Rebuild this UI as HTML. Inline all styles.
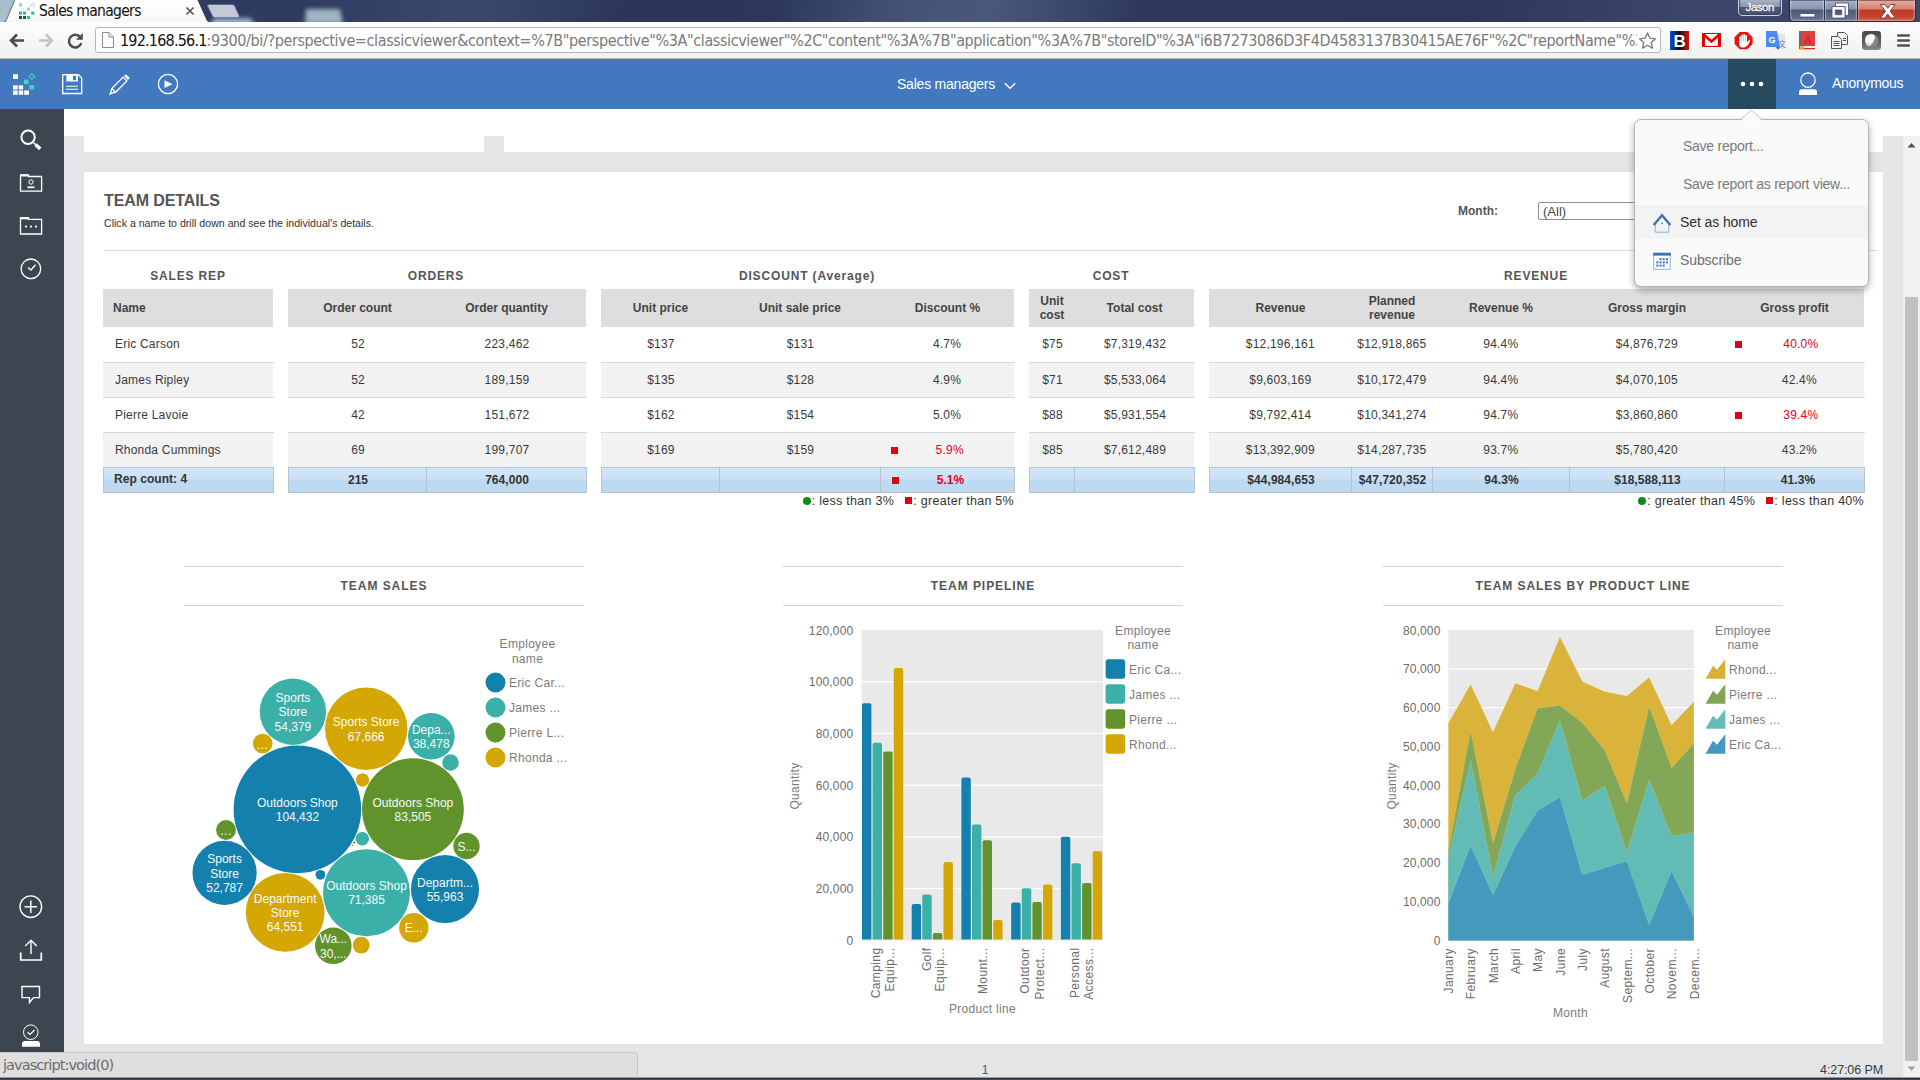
<!DOCTYPE html>
<html>
<head>
<meta charset="utf-8">
<title>Sales managers</title>
<style>
*{box-sizing:border-box;margin:0;padding:0}
html,body{width:1920px;height:1080px;overflow:hidden;background:#fff;font-family:"Liberation Sans",Arial,sans-serif;color:#333}
.abs{position:absolute}
#root{position:absolute;left:0;top:0;width:1920px;height:1080px;overflow:hidden;background:#fff}
/* browser chrome */
#titlebar{position:absolute;left:0;top:0;width:1920px;height:23px;background:linear-gradient(100deg,#2f3b61 0,#2f3b61 300px,#3c486b 470px,#2b365a 620px,#2c375b 760px,#47547a 900px,#4a577b 980px,#2e395d 1120px,#2c375b 1450px,#3a4568 1650px,#3c476a 1920px)}
#toolbar{position:absolute;left:0;top:22px;width:1920px;height:37px;background:linear-gradient(#fdfdfd,#f1f1f1);border-bottom:1px solid #b9b9b9}
#tab{position:absolute;left:0;top:0;width:215px;height:23px}
#tabtitle{position:absolute;left:39px;top:1px;font-size:15.5px;line-height:20px;color:#111;font-family:"DejaVu Sans Condensed","DejaVu Sans","Liberation Sans",sans-serif;letter-spacing:-0.7px;white-space:nowrap}
#addr{position:absolute;left:95px;top:27px;width:1566px;height:26px;background:#fff;border:1px solid #b5b5b5;border-radius:3px}
#url{position:absolute;left:120px;top:30px;font-size:16px;line-height:22px;color:#7a7a7a;white-space:nowrap;font-family:"DejaVu Sans Condensed","DejaVu Sans","Liberation Sans",sans-serif;letter-spacing:-0.38px;width:1517px;overflow:hidden}
#url b{font-weight:normal;color:#111;letter-spacing:-0.8px}
/* app header */
#apphdr{position:absolute;left:0;top:59px;width:1920px;height:50px;background:#4178be}
#morebtn{position:absolute;left:1728px;top:59px;width:48px;height:50px;background:#264a60}
.hdrtxt{position:absolute;color:#fff;font-size:14px;line-height:20px;white-space:nowrap}
/* sidebar */
#sidebar{position:absolute;left:0;top:109px;width:64px;height:944px;background:#3c4651}
/* content */
#content{position:absolute;left:64px;top:109px;width:1856px;height:944px;background:#fff}
.gray{position:absolute;background:#e4e5e7}
.white{position:absolute;background:#fff}

.sect{position:absolute;text-align:center;font-size:12px;font-weight:bold;letter-spacing:0.85px;color:#555;line-height:14px;white-space:nowrap}
.th{position:absolute;text-align:center;font-size:12px;font-weight:bold;color:#444;line-height:14px;white-space:nowrap}
.td{position:absolute;text-align:center;font-size:12px;color:#3a3a3a;line-height:14px;white-space:nowrap;letter-spacing:0.2px}
.tf{position:absolute;text-align:center;font-size:12px;font-weight:bold;color:#333;line-height:14px;white-space:nowrap;letter-spacing:0.05px}
.lg{position:absolute;text-align:right;font-size:12.5px;color:#333;line-height:16px;white-space:nowrap;letter-spacing:0.28px}
.gdot{display:inline-block;width:8px;height:8px;border-radius:50%;background:#0a8a1f;vertical-align:0px;margin-right:1px}
.rsq{display:inline-block;width:7px;height:7px;background:#e1000f;vertical-align:1px;margin-right:1px}
.ctitle{position:absolute;text-align:center;font-size:12px;font-weight:bold;letter-spacing:0.95px;color:#555;line-height:14px;white-space:nowrap}
.pi{position:absolute;font-size:14px;line-height:20px;white-space:nowrap;letter-spacing:-0.25px}
/* status */
#status{position:absolute;left:0;top:1052px;width:638px;height:26px;background:#dfdfdf;border-top:1px solid #c8c8c8;border-right:1px solid #c8c8c8;border-top-right-radius:4px;font-family:"DejaVu Sans","Liberation Sans",sans-serif;font-size:14.5px;letter-spacing:-0.93px;color:#6b6b6b;line-height:24px;padding-left:3px}
#bottomline{position:absolute;left:0;top:1077px;width:1920px;height:3px;background:linear-gradient(#9a9a9a 0,#9a9a9a 25%,#2b3040 34%,#2b3040 70%,#5d6478 100%)}
</style>
</head>
<body>
<div id="root">
<!--CHROME-->
<div id="titlebar"></div>
<svg class="abs" style="left:0;top:0" width="1920" height="23" viewBox="0 0 1920 23">
  <defs>
    <linearGradient id="tbg" x1="0" y1="0" x2="0" y2="1"><stop offset="0" stop-color="#fff"/><stop offset="1" stop-color="#f6f6f6"/></linearGradient>
    <linearGradient id="clsg" x1="0" y1="0" x2="0" y2="1"><stop offset="0" stop-color="#e6ada2"/><stop offset="0.42" stop-color="#d57f6e"/><stop offset="0.47" stop-color="#c23a23"/><stop offset="0.8" stop-color="#c8452e"/><stop offset="1" stop-color="#cf6450"/></linearGradient>
    <linearGradient id="wbg" x1="0" y1="0" x2="0" y2="1"><stop offset="0" stop-color="#a9b1c5"/><stop offset="0.42" stop-color="#8892ab"/><stop offset="0.47" stop-color="#4e597a"/><stop offset="1" stop-color="#6b7695"/></linearGradient>
  </defs>
  <!-- blurred aero highlights -->
  <defs><filter id="bl" x="-30%" y="-60%" width="160%" height="220%"><feGaussianBlur stdDeviation="2.2"/></filter>
  <filter id="bl2" x="-30%" y="-60%" width="160%" height="220%"><feGaussianBlur stdDeviation="14"/></filter></defs>
  <path d="M306 9 L340 9 L343 24 L305 24Z" fill="#b9d2d6" opacity="0.8" filter="url(#bl)"/>
  <path d="M214 18 L250 18 L256 25 L210 25Z" fill="#a5c3e0" opacity="0.9" filter="url(#bl)"/>
  <!-- new-tab button -->
  <path d="M207.500 4.500 h24.500 q2 0 2.800 1.800 l4.300 9.400 q0.800 2 -1.400 2 h-22.500 q-2 0 -2.900 -1.900 l-4.600 -9.500 q-0.700 -1.800 1.300 -1.800z" fill="#c3c9d6" stroke="#5d6784" stroke-width="0.8"/>
  <!-- left sliver -->
  <path d="M0 0 H14.500 L6 20 Q4.500 23.500 0 23.500Z" fill="#a9bfcb"/>
  <path d="M14.500 0 L6 20 Q4.500 23.500 0 23.500" fill="none" stroke="#8097a6" stroke-width="1"/>
  <!-- active tab -->
  <path d="M0 24 Q5 24 6.800 20 L15.300 0 L197.500 0 L206.500 20 Q208 23 212 23 L212 24 Z" fill="url(#tbg)"/>
  <!-- favicon -->
  <g>
    <rect x="19" y="3.200" width="3" height="3.300" fill="#8fd9cb"/>
    <rect x="27" y="7.500" width="3" height="3.200" fill="#8fd9cb"/>
    <rect x="19" y="11.600" width="3" height="3" fill="#1fbfa5"/><rect x="23" y="11.600" width="3" height="3" fill="#1fbfa5"/><rect x="31.200" y="11.600" width="3.200" height="3" fill="#1fbfa5"/>
    <rect x="19" y="16" width="3" height="3" fill="#0a5a4c"/><rect x="23" y="16" width="3" height="3" fill="#0c6354"/><rect x="27" y="16" width="3" height="3" fill="#1fbfa5"/>
    <rect x="31.400" y="3.600" width="2.800" height="2.800" fill="none" stroke="#a9e2d7" stroke-width="0.9" transform="rotate(45 32.800 5)"/>
  </g>
  <!-- tab close -->
  <path d="M186.5 7.5 l7 7 M193.5 7.5 l-7 7" stroke="#555" stroke-width="1.7"/>
  <!-- Jason button -->
  <defs><linearGradient id="jsg" x1="0" y1="0" x2="0" y2="1"><stop offset="0" stop-color="#a9b0c5"/><stop offset="0.42" stop-color="#8e97b0"/><stop offset="0.46" stop-color="#4d5979"/><stop offset="1" stop-color="#56628280"/></linearGradient></defs>
  <path d="M1738.500 0 V11 Q1738.500 15.500 1743 15.500 H1777 Q1781.500 15.500 1781.500 11 V0" fill="url(#jsg)" stroke="#cdd2df" stroke-width="1"/>
  <path d="M1739.700 0 V10.800 Q1739.700 14.300 1743.200 14.300 H1776.800 Q1780.300 14.300 1780.300 10.800 V0" fill="none" stroke="#2f3855" stroke-width="0.8"/>
  <text x="1746.300" y="11.300" font-family="Liberation Sans, sans-serif" font-size="11.500" fill="#1e2640" letter-spacing="-0.55" opacity="0.6" stroke="#1e2640" stroke-width="0.3">Jason</text>
  <text x="1745.800" y="10.800" font-family="Liberation Sans, sans-serif" font-size="11.500" fill="#fff" letter-spacing="-0.55" stroke="#fff" stroke-width="0.3">Jason</text>
  <!-- window buttons -->
  <path d="M1789.500 0 V17 Q1789.500 21.500 1794 21.500 H1911 Q1915.500 21.500 1915.500 17 V0Z" fill="url(#wbg)" stroke="#1c233b" stroke-width="1"/>
  <path d="M1857.500 0 V21.500 H1911 Q1915.500 21.500 1915.500 17 V0Z" fill="url(#clsg)" stroke="#43201c" stroke-width="1"/>
  <path d="M1824.500 0 V21" stroke="#2a3350" stroke-width="1"/>
  <path d="M1790.700 0 V17 Q1790.700 20.300 1794 20.300 H1911 Q1914.300 20.300 1914.300 17 V0 M1825.600 0 V20 M1823.400 0 V20 M1858.700 0 V20 M1856.300 0 V20" fill="none" stroke="#e3e6ee" stroke-width="0.9" opacity="0.55"/>
  <rect x="1800" y="13.600" width="15" height="3.400" fill="#fff" stroke="#434d68" stroke-width="0.8"/>
  <path d="M1835.500 3 h13 v12.500 h-3.500 v-9 h-9.500z" fill="#fff" stroke="#434d68" stroke-width="0.8"/>
  <path d="M1832 6.500 h13 v11.500 h-13z M1835.300 10 v4.700 h6.400 v-4.700z" fill="#fff" fill-rule="evenodd" stroke="#434d68" stroke-width="0.8"/>
  <path d="M1880.500 4.500 h4.500 l2.800 3.800 l2.800 -3.800 h4.500 l-5 6.700 l5.200 6.800 h-4.600 l-2.900 -4 l-2.900 4 h-4.600 l5.200 -6.800z" fill="#fff" stroke="#5b2a22" stroke-width="0.8"/>
</svg>
<div id="tabtitle">Sales managers</div>
<div id="toolbar"></div>
<svg class="abs" style="left:0;top:22px" width="1920" height="37" viewBox="0 22 1920 37">
  <!-- back -->
  <path d="M24 40.500 H11.500 M17 34.500 L11 40.500 L17 46.500" fill="none" stroke="#4d4d4d" stroke-width="2.600"/>
  <!-- forward -->
  <path d="M39 40.500 H51.500 M46 34.500 L52 40.500 L46 46.500" fill="none" stroke="#c4c4c4" stroke-width="2.600"/>
  <!-- reload -->
  <path d="M80.300 37.300 A6.300 6.300 0 1 0 81.300 43" fill="none" stroke="#4d4d4d" stroke-width="2.500"/>
  <path d="M82.800 33 V39.800 H76z" fill="#4d4d4d"/>
</svg>
<div id="addr"></div>
<svg class="abs" style="left:100px;top:31px" width="16" height="18" viewBox="0 0 16 18">
  <path d="M2.500 1.500 H9 L13.500 6 V16.500 H2.500Z" fill="#fdfdfd" stroke="#8c8c8c" stroke-width="1"/>
  <path d="M9 1.500 V6 H13.500" fill="#e8e8e8" stroke="#8c8c8c" stroke-width="1"/>
</svg>
<div id="url"><b>192.168.56.1</b>:9300/bi/?perspective=classicviewer&amp;context=%7B"perspective"%3A"classicviewer"%2C"content"%3A%7B"application"%3A%7B"storeID"%3A"i6B7273086D3F4D4583137B30415AE76F"%2C"reportName"%3A"Sales</div>
<svg class="abs" style="left:1636px;top:28px" width="284" height="26" viewBox="1636 28 284 26">
  <!-- star -->
  <path d="M1647.500 33 l2.400 5.200 5.600 0.600 -4.200 3.800 1.200 5.600 -5 -2.900 -5 2.900 1.200 -5.600 -4.200 -3.800 5.600 -0.600z" fill="#fff" stroke="#777" stroke-width="1.300" stroke-linejoin="round"/>
  <!-- B -->
  <defs><linearGradient id="bg1" x1="0" x2="1"><stop offset="0" stop-color="#0a4bd6"/><stop offset="0.5" stop-color="#111"/><stop offset="1" stop-color="#e01010"/></linearGradient></defs>
  <rect x="1670" y="31" width="19" height="19" fill="url(#bg1)"/>
  <text x="1673.500" y="47" font-family="Liberation Sans, sans-serif" font-weight="bold" font-size="17" fill="#fff">B</text>
  <!-- gmail -->
  <rect x="1702.500" y="33.500" width="18" height="13" fill="#fff" stroke="#d00" stroke-width="1"/>
  <path d="M1703.500 46 V34 M1719.500 46 V34" stroke="#e00000" stroke-width="3"/>
  <path d="M1703 34 L1711.500 41.500 L1720 34" fill="none" stroke="#e00000" stroke-width="2.600"/>
  <path d="M1705 46 L1709.500 41 M1718 46 L1713.500 41" stroke="#f0b0b0" stroke-width="0.700"/>
  <!-- stop hand -->
  <path d="M1739.800 32 h7.600 l5.200 5.200 v6.800 l-5.200 5.200 h-7.600 l-5.200 -5.200 v-6.800z" fill="#e41414"/>
  <g fill="#fff">
    <rect x="1739.300" y="36.300" width="1.700" height="7" rx="0.850"/>
    <rect x="1741.300" y="34.600" width="1.700" height="8" rx="0.850"/>
    <rect x="1743.300" y="34" width="1.700" height="8" rx="0.850"/>
    <rect x="1745.300" y="35" width="1.700" height="8" rx="0.850"/>
    <path d="M1739.300 41 h7.700 v3.500 q0 3 -3.500 3 h-1.200 q-3 0 -3 -3z"/>
    <path d="M1746.500 43.500 l2.200 -3.300 q0.900 -0.800 1.500 0.200 l-2.600 5.600z"/>
  </g>
  <!-- translate -->
  <rect x="1773" y="34" width="12" height="15" fill="#e3e3e3"/>
  <path d="M1766 31 h11 l3 16 h-14z" fill="#4a8af4"/>
  <path d="M1776 47 l2 3 2 -3z" fill="#2d5fc4"/>
  <text x="1768.500" y="43" font-family="Liberation Sans, sans-serif" font-weight="bold" font-size="9" fill="#fff">G</text>
  <text x="1778" y="46.500" font-family="Liberation Sans, Noto Sans CJK SC, sans-serif" font-size="8" fill="#5a8bd0">文</text>
  <!-- book -->
  <rect x="1799" y="31" width="16" height="15" fill="#e04040"/>
  <rect x="1799" y="31" width="2.500" height="18" fill="#6a6a6a"/>
  <rect x="1801" y="46" width="14" height="2.500" fill="#f1f1f1"/>
  <rect x="1801" y="48" width="14" height="1.300" fill="#d03030"/>
  <text x="1803.500" y="43.500" font-family="Liberation Sans, sans-serif" font-weight="bold" font-size="11.500" fill="#c42e2e">A</text>
  <path d="M1800 46 h4 v4 l-2 -1.500 -2 1.500z" fill="#f0b400"/>
  <!-- copy -->
  <path d="M1837.500 32.500 h7 l3 3 v9 h-10z" fill="#f4f4f4" stroke="#555" stroke-width="1"/>
  <path d="M1831.500 36.500 h7 l3 3 v9 h-10z" fill="#f4f4f4" stroke="#555" stroke-width="1"/>
  <path d="M1833.500 41.500 h6 M1833.500 43.500 h6 M1833.500 45.500 h6 M1843 38.500 h3 M1843 40.500 h3" stroke="#555" stroke-width="1"/>
  <!-- shield -->
  <defs><linearGradient id="shg" x1="0" y1="0" x2="0" y2="1"><stop offset="0" stop-color="#474747"/><stop offset="0.6" stop-color="#5e5e5e"/><stop offset="1" stop-color="#8c8c8c"/></linearGradient></defs>
  <rect x="1862" y="31" width="19" height="19" rx="3.200" fill="url(#shg)"/>
  <path d="M1871 33.800 Q1878.500 35 1878.600 41 Q1878 47.500 1869.500 47 Z" fill="#858585"/>
  <path d="M1865 40 Q1865 34.200 1871.500 34 Q1876 34.500 1874.800 38.500 Q1873 44 1869 46.300 Q1865.200 45 1865 40Z" fill="#fafafa"/>
  <path d="M1866.500 42 L1872 43.500 L1869 46.300 Q1866.800 45 1866.500 42Z" fill="#dcdcdc"/>
  <!-- hamburger -->
  <path d="M1898.300 35.500 h10.400 M1898.300 40.500 h10.400 M1898.300 45.500 h10.400" stroke="#505050" stroke-width="2.700" stroke-linecap="round"/>
</svg>
<!--APPHDR-->
<div id="apphdr"></div>
<div id="morebtn"></div>
<svg class="abs" style="left:0;top:59px" width="1920" height="50" viewBox="0 59 1920 50">
  <!-- logo -->
  <rect x="13" y="74.200" width="5" height="4.800" fill="#fff"/>
  <rect x="13" y="85.300" width="4.700" height="4.200" fill="#fff"/><rect x="18.700" y="85.300" width="4.500" height="4.200" fill="#fff"/>
  <rect x="13" y="90.500" width="4.700" height="4.300" fill="#fff"/><rect x="18.700" y="90.500" width="4.500" height="4.300" fill="#fff"/><rect x="24.200" y="90.500" width="4.800" height="4.300" fill="#fff"/>
  <rect x="24" y="79.600" width="4.700" height="4.500" fill="#41d6c3"/>
  <rect x="29.400" y="85" width="4.700" height="4.600" fill="#41d6c3"/>
  <rect x="29.800" y="74.500" width="4" height="4" fill="none" stroke="#41d6c3" stroke-width="1" transform="rotate(45 31.800 76.500)"/>
  <!-- save -->
  <path d="M62.700 74.700 H78.500 L81.700 78 V93.500 H62.700Z" fill="none" stroke="#fff" stroke-width="1.300"/>
  <path d="M66.400 74.700 H78 V81.400 H66.400Z M73 75.800 V80.300 H76 V75.800Z" fill="#fff" fill-rule="evenodd"/>
  <path d="M66 86.300 H78 M66 89.300 H78" stroke="#fff" stroke-width="1.100"/>
  <!-- pencil -->
  <g transform="rotate(45 119 85)">
    <rect x="116.300" y="72.500" width="5.400" height="2.600" fill="#fff"/>
    <rect x="116.300" y="76.500" width="5.400" height="16" fill="none" stroke="#fff" stroke-width="1.300"/>
    <path d="M116.300 92.500 L119 97 L121.700 92.500" fill="none" stroke="#fff" stroke-width="1.300"/>
    <path d="M117.800 96 L119 99.500 L120.200 96Z" fill="#fff"/>
  </g>
  <!-- play -->
  <circle cx="168" cy="84" r="9.600" fill="none" stroke="#fff" stroke-width="1.300"/>
  <path d="M164.500 80.200 L172.500 84.200 L164.500 88Z" fill="#fff"/>
  <!-- chevron -->
  <path d="M1004.800 83.300 L1010 88.300 L1015.200 83.300" fill="none" stroke="#fff" stroke-width="1.500"/>
  <!-- dots -->
  <circle cx="1743" cy="84" r="2.300" fill="#fff"/><circle cx="1752" cy="84" r="2.300" fill="#fff"/><circle cx="1761" cy="84" r="2.300" fill="#fff"/>
  <!-- user -->
  <circle cx="1808" cy="80.200" r="7.200" fill="none" stroke="#fff" stroke-width="1.300"/>
  <path d="M1799 95 V92 Q1799 89.300 1802 89.300 H1814 Q1817 89.300 1817 92 V95Z" fill="#fff"/>
</svg>
<div class="hdrtxt" style="left:897px;top:74px;letter-spacing:-0.22px">Sales managers</div>
<div class="hdrtxt" style="left:1832px;top:73px;letter-spacing:-0.3px">Anonymous</div>
<!--SIDEBAR-->
<div id="sidebar"></div>
<svg class="abs" style="left:0;top:109px" width="64" height="944" viewBox="0 109 64 944">
  <g fill="none" stroke="#fff">
  <!-- search -->
  <circle cx="28.100" cy="137.300" r="6.700" stroke-width="2"/>
  <path d="M33.600 142.800 L35.500 144.500" stroke-width="1.600"/>
  <path d="M35.500 144.500 L40.200 148.800" stroke-width="3.600"/>
  <!-- folder user -->
  <path d="M20.500 174.800 H28.500 V176.500 H41.600 V191.200 H20.500Z" stroke-width="1.300"/>
  <path d="M20.500 175.500 H28.500" stroke-width="2"/>
  <circle cx="31" cy="182" r="2.200" stroke-width="1"/>
  <path d="M27.500 187.300 H34.500" stroke-width="1.800"/>
  <!-- folder dots -->
  <path d="M20.500 217.600 H28.500 V219.300 H41.600 V234 H20.500Z" stroke-width="1.300"/>
  <path d="M20.500 218.300 H28.500" stroke-width="2"/>
  <!-- clock -->
  <circle cx="30.900" cy="268.800" r="9.800" stroke-width="1.300"/>
  <path d="M28 267.500 L31 270 L35.500 264.800" stroke-width="1.300"/>
  <!-- plus -->
  <circle cx="30.800" cy="906.700" r="10.800" stroke-width="1.400"/>
  <path d="M30.800 900.500 V913 M24.600 906.700 H37" stroke-width="1.500"/>
  <!-- upload -->
  <path d="M20.700 952.500 V960 H41.300 V952.500" stroke-width="1.700"/>
  <path d="M31 954 V940.500 M25.300 946 L31 940.300 L36.700 946" stroke-width="1.400"/>
  <!-- comment -->
  <path d="M22 986.500 H39.500 V997.600 H33.500 L29.500 1002.500 V997.600 H22Z" stroke-width="1.400"/>
  <!-- person check -->
  <circle cx="30.800" cy="1032.200" r="7.300" stroke-width="1"/>
  <path d="M27.600 1032.300 L30 1034.500 L34.500 1030" stroke-width="1.200"/>
  </g>
  <circle cx="26" cy="226.600" r="1.100" fill="#fff"/><circle cx="31" cy="226.600" r="1.100" fill="#fff"/><circle cx="36" cy="226.600" r="1.100" fill="#fff"/>
  <path d="M22 1046.800 V1044 Q22 1041 25 1041 H37 Q40 1041 40 1044 V1046.800Z" fill="#fff"/>
</svg>
<!--CONTENT-->
<div id="content"></div>
<div class="gray" style="left:64px;top:136px;width:20px;height:942px;background:#e4e5e7"></div>
<div class="gray" style="left:484px;top:136px;width:20px;height:16px;background:#e4e5e7"></div>
<div class="gray" style="left:64px;top:152px;width:1839px;height:20px;background:#e4e5e7"></div>
<div class="gray" style="left:1883px;top:136px;width:20px;height:942px;background:#e4e5e7"></div>
<div class="gray" style="left:64px;top:1044px;width:1839px;height:34px;background:#e4e5e7"></div>
<div class="gray" style="left:1903px;top:136px;width:17px;height:942px;background:#f1f1f1"></div>
<div class="gray" style="left:1905px;top:297px;width:13px;height:764px;background:#c1c1c1"></div>
<svg class="abs" style="left:1903px;top:136px" width="17" height="942" viewBox="1903 136 17 942"><path d="M1907.500 147.500 L1911.500 143 L1915.500 147.500Z" fill="#505050"/><path d="M1907.500 1066.500 L1911.500 1071 L1915.500 1066.500Z" fill="#a3a3a3"/></svg>
<div class="abs" style="left:979px;top:1063px;width:12px;text-align:center;font-size:12px;line-height:14px;color:#555">1</div>
<div class="abs" style="left:1783px;top:1062px;width:100px;text-align:right;font-size:12.5px;line-height:16px;color:#3a3a3a;letter-spacing:-0.1px">4:27:06 PM</div>
<div class="abs" style="left:104px;top:191px;font-size:16px;font-weight:bold;line-height:20px;color:#555;letter-spacing:-0.1px;white-space:nowrap">TEAM DETAILS</div>
<div class="abs" style="left:104px;top:216px;font-size:10.6px;line-height:14px;color:#333;white-space:nowrap">Click a name to drill down and see the individual's details.</div>
<div class="abs" style="left:104px;top:250px;width:1774px;height:1px;background:#dcdcdc"></div>
<div class="abs" style="left:1458px;top:203px;font-size:12px;font-weight:bold;line-height:16px;color:#555;white-space:nowrap">Month:</div>
<div class="abs" style="left:1538px;top:202px;width:160px;height:18px;background:#fff;border:1px solid #8f8f8f;border-radius:2px"></div>
<div class="abs" style="left:1543px;top:204px;font-size:13px;line-height:16px;color:#444;white-space:nowrap">(All)</div>
<div class="sect" style="left:88px;top:269px;width:200px">SALES REP</div>
<div class="abs" style="left:103px;top:289px;width:170px;height:38px;background:#dedede"></div>
<div class="th" style="left:113px;top:301px;text-align:left">Name</div>
<div class="td" style="left:115px;top:337px;text-align:left">Eric Carson</div>
<div class="abs" style="left:103px;top:363px;width:170px;height:34px;background:#f2f2f2"></div>
<div class="abs" style="left:103px;top:362px;width:171px;height:1px;background:#d9d9d9"></div>
<div class="td" style="left:115px;top:373px;text-align:left">James Ripley</div>
<div class="abs" style="left:103px;top:397px;width:171px;height:1px;background:#d9d9d9"></div>
<div class="td" style="left:115px;top:408px;text-align:left">Pierre Lavoie</div>
<div class="abs" style="left:103px;top:433px;width:170px;height:34px;background:#f2f2f2"></div>
<div class="abs" style="left:103px;top:432px;width:171px;height:1px;background:#d9d9d9"></div>
<div class="td" style="left:115px;top:443px;text-align:left">Rhonda Cummings</div>
<div class="abs" style="left:103px;top:467px;width:171px;height:26px;background:linear-gradient(#cfe4f7 0,#cde2f6 44%,#bedaf2 50%,#bcd9f1 100%);border:1px solid #b7c3cf"></div>
<div class="tf" style="left:114px;top:472px;text-align:left">Rep count: 4</div>
<div class="sect" style="left:336px;top:269px;width:200px">ORDERS</div>
<div class="abs" style="left:288px;top:289px;width:298px;height:38px;background:#dedede"></div>
<div class="th" style="left:288.5px;top:301px;width:138px">Order count</div>
<div class="th" style="left:426.5px;top:301px;width:160px">Order quantity</div>
<div class="td" style="left:289px;top:337px;width:138px;">52</div>
<div class="td" style="left:427px;top:337px;width:160px;">223,462</div>
<div class="abs" style="left:288px;top:363px;width:298px;height:34px;background:#f2f2f2"></div>
<div class="abs" style="left:288px;top:362px;width:299px;height:1px;background:#d9d9d9"></div>
<div class="td" style="left:289px;top:373px;width:138px;">52</div>
<div class="td" style="left:427px;top:373px;width:160px;">189,159</div>
<div class="abs" style="left:288px;top:397px;width:299px;height:1px;background:#d9d9d9"></div>
<div class="td" style="left:289px;top:408px;width:138px;">42</div>
<div class="td" style="left:427px;top:408px;width:160px;">151,672</div>
<div class="abs" style="left:288px;top:433px;width:298px;height:34px;background:#f2f2f2"></div>
<div class="abs" style="left:288px;top:432px;width:299px;height:1px;background:#d9d9d9"></div>
<div class="td" style="left:289px;top:443px;width:138px;">69</div>
<div class="td" style="left:427px;top:443px;width:160px;">199,707</div>
<div class="abs" style="left:288px;top:467px;width:299px;height:26px;background:linear-gradient(#cfe4f7 0,#cde2f6 44%,#bedaf2 50%,#bcd9f1 100%);border:1px solid #b7c3cf"></div>
<div class="tf" style="left:289px;top:473px;width:138px;">215</div>
<div class="abs" style="left:426px;top:468px;width:1px;height:24px;background:#b3c2d0"></div>
<div class="tf" style="left:427px;top:473px;width:160px;">764,000</div>
<div class="sect" style="left:707px;top:269px;width:200px">DISCOUNT (Average)</div>
<div class="abs" style="left:601px;top:289px;width:413px;height:38px;background:#dedede"></div>
<div class="th" style="left:601.5px;top:301px;width:118px">Unit price</div>
<div class="th" style="left:719.5px;top:301px;width:161px">Unit sale price</div>
<div class="th" style="left:880.5px;top:301px;width:134px">Discount %</div>
<div class="td" style="left:602px;top:337px;width:118px;">$137</div>
<div class="td" style="left:720px;top:337px;width:161px;">$131</div>
<div class="td" style="left:880px;top:337px;width:134px;">4.7%</div>
<div class="abs" style="left:601px;top:363px;width:413px;height:34px;background:#f2f2f2"></div>
<div class="abs" style="left:601px;top:362px;width:414px;height:1px;background:#d9d9d9"></div>
<div class="td" style="left:602px;top:373px;width:118px;">$135</div>
<div class="td" style="left:720px;top:373px;width:161px;">$128</div>
<div class="td" style="left:880px;top:373px;width:134px;">4.9%</div>
<div class="abs" style="left:601px;top:397px;width:414px;height:1px;background:#d9d9d9"></div>
<div class="td" style="left:602px;top:408px;width:118px;">$162</div>
<div class="td" style="left:720px;top:408px;width:161px;">$154</div>
<div class="td" style="left:880px;top:408px;width:134px;">5.0%</div>
<div class="abs" style="left:601px;top:433px;width:413px;height:34px;background:#f2f2f2"></div>
<div class="abs" style="left:601px;top:432px;width:414px;height:1px;background:#d9d9d9"></div>
<div class="td" style="left:602px;top:443px;width:118px;">$169</div>
<div class="td" style="left:720px;top:443px;width:161px;">$159</div>
<div class="td" style="left:882.7px;top:443px;width:134px;color:#e8001c;">5.9%</div>
<div class="abs" style="left:891px;top:447px;width:7px;height:7px;background:#e1000f"></div>
<div class="abs" style="left:601px;top:467px;width:414px;height:26px;background:linear-gradient(#cfe4f7 0,#cde2f6 44%,#bedaf2 50%,#bcd9f1 100%);border:1px solid #b7c3cf"></div>
<div class="abs" style="left:719px;top:468px;width:1px;height:24px;background:#b3c2d0"></div>
<div class="abs" style="left:880px;top:468px;width:1px;height:24px;background:#b3c2d0"></div>
<div class="tf" style="left:883.5px;top:473px;width:134px;color:#e8001c;">5.1%</div>
<div class="abs" style="left:891.5px;top:477px;width:7px;height:7px;background:#e1000f"></div>
<div class="sect" style="left:1011px;top:269px;width:200px">COST</div>
<div class="abs" style="left:1029px;top:289px;width:165px;height:38px;background:#dedede"></div>
<div class="th" style="left:1029.5px;top:294px;width:45px">Unit<br>cost</div>
<div class="th" style="left:1074.5px;top:301px;width:120px">Total cost</div>
<div class="td" style="left:1030px;top:337px;width:45px;">$75</div>
<div class="td" style="left:1075px;top:337px;width:120px;">$7,319,432</div>
<div class="abs" style="left:1029px;top:363px;width:165px;height:34px;background:#f2f2f2"></div>
<div class="abs" style="left:1029px;top:362px;width:166px;height:1px;background:#d9d9d9"></div>
<div class="td" style="left:1030px;top:373px;width:45px;">$71</div>
<div class="td" style="left:1075px;top:373px;width:120px;">$5,533,064</div>
<div class="abs" style="left:1029px;top:397px;width:166px;height:1px;background:#d9d9d9"></div>
<div class="td" style="left:1030px;top:408px;width:45px;">$88</div>
<div class="td" style="left:1075px;top:408px;width:120px;">$5,931,554</div>
<div class="abs" style="left:1029px;top:433px;width:165px;height:34px;background:#f2f2f2"></div>
<div class="abs" style="left:1029px;top:432px;width:166px;height:1px;background:#d9d9d9"></div>
<div class="td" style="left:1030px;top:443px;width:45px;">$85</div>
<div class="td" style="left:1075px;top:443px;width:120px;">$7,612,489</div>
<div class="abs" style="left:1029px;top:467px;width:166px;height:26px;background:linear-gradient(#cfe4f7 0,#cde2f6 44%,#bedaf2 50%,#bcd9f1 100%);border:1px solid #b7c3cf"></div>
<div class="abs" style="left:1074px;top:468px;width:1px;height:24px;background:#b3c2d0"></div>
<div class="sect" style="left:1436px;top:269px;width:200px">REVENUE</div>
<div class="abs" style="left:1209px;top:289px;width:655px;height:38px;background:#dedede"></div>
<div class="th" style="left:1209.5px;top:301px;width:142px">Revenue</div>
<div class="th" style="left:1351.5px;top:294px;width:81px">Planned<br>revenue</div>
<div class="th" style="left:1432.5px;top:301px;width:137px">Revenue %</div>
<div class="th" style="left:1569.5px;top:301px;width:155px">Gross margin</div>
<div class="th" style="left:1724.5px;top:301px;width:140px">Gross profit</div>
<div class="td" style="left:1209.3px;top:337px;width:142px;">$12,196,161</div>
<div class="td" style="left:1351.3px;top:337px;width:81px;">$12,918,865</div>
<div class="td" style="left:1432.3px;top:337px;width:137px;">94.4%</div>
<div class="td" style="left:1569.3px;top:337px;width:155px;">$4,876,729</div>
<div class="td" style="left:1730.8px;top:337px;width:140px;color:#e8001c;">40.0%</div>
<div class="abs" style="left:1734.5px;top:341px;width:7px;height:7px;background:#e1000f"></div>
<div class="abs" style="left:1209px;top:363px;width:655px;height:34px;background:#f2f2f2"></div>
<div class="abs" style="left:1209px;top:362px;width:656px;height:1px;background:#d9d9d9"></div>
<div class="td" style="left:1209.3px;top:373px;width:142px;">$9,603,169</div>
<div class="td" style="left:1351.3px;top:373px;width:81px;">$10,172,479</div>
<div class="td" style="left:1432.3px;top:373px;width:137px;">94.4%</div>
<div class="td" style="left:1569.3px;top:373px;width:155px;">$4,070,105</div>
<div class="td" style="left:1729.3px;top:373px;width:140px;">42.4%</div>
<div class="abs" style="left:1209px;top:397px;width:656px;height:1px;background:#d9d9d9"></div>
<div class="td" style="left:1209.3px;top:408px;width:142px;">$9,792,414</div>
<div class="td" style="left:1351.3px;top:408px;width:81px;">$10,341,274</div>
<div class="td" style="left:1432.3px;top:408px;width:137px;">94.7%</div>
<div class="td" style="left:1569.3px;top:408px;width:155px;">$3,860,860</div>
<div class="td" style="left:1730.8px;top:408px;width:140px;color:#e8001c;">39.4%</div>
<div class="abs" style="left:1734.5px;top:412px;width:7px;height:7px;background:#e1000f"></div>
<div class="abs" style="left:1209px;top:433px;width:655px;height:34px;background:#f2f2f2"></div>
<div class="abs" style="left:1209px;top:432px;width:656px;height:1px;background:#d9d9d9"></div>
<div class="td" style="left:1209.3px;top:443px;width:142px;">$13,392,909</div>
<div class="td" style="left:1351.3px;top:443px;width:81px;">$14,287,735</div>
<div class="td" style="left:1432.3px;top:443px;width:137px;">93.7%</div>
<div class="td" style="left:1569.3px;top:443px;width:155px;">$5,780,420</div>
<div class="td" style="left:1729.3px;top:443px;width:140px;">43.2%</div>
<div class="abs" style="left:1209px;top:467px;width:656px;height:26px;background:linear-gradient(#cfe4f7 0,#cde2f6 44%,#bedaf2 50%,#bcd9f1 100%);border:1px solid #b7c3cf"></div>
<div class="tf" style="left:1210px;top:473px;width:142px;">$44,984,653</div>
<div class="abs" style="left:1351px;top:468px;width:1px;height:24px;background:#b3c2d0"></div>
<div class="tf" style="left:1352px;top:473px;width:81px;">$47,720,352</div>
<div class="abs" style="left:1432px;top:468px;width:1px;height:24px;background:#b3c2d0"></div>
<div class="tf" style="left:1433px;top:473px;width:137px;">94.3%</div>
<div class="abs" style="left:1569px;top:468px;width:1px;height:24px;background:#b3c2d0"></div>
<div class="tf" style="left:1570px;top:473px;width:155px;">$18,588,113</div>
<div class="abs" style="left:1724px;top:468px;width:1px;height:24px;background:#b3c2d0"></div>
<div class="tf" style="left:1728px;top:473px;width:140px;">41.3%</div>
<div class="lg" style="left:700px;top:493px;width:314px"><span class="gdot"></span>: less than 3% &nbsp;&nbsp;<span class="rsq"></span>: greater than 5%</div>
<div class="lg" style="left:1500px;top:493px;width:364px"><span class="gdot"></span>: greater than 45% &nbsp;&nbsp;<span class="rsq"></span>: less than 40%</div>
<!--REPORT-->
<div class="abs" style="left:184px;top:566px;width:400px;height:1px;background:#d4d4d4"></div>
<div class="abs" style="left:184px;top:605px;width:400px;height:1px;background:#d4d4d4"></div>
<div class="ctitle" style="left:184px;top:579px;width:400px">TEAM SALES</div>
<div class="abs" style="left:783px;top:566px;width:400px;height:1px;background:#d4d4d4"></div>
<div class="abs" style="left:783px;top:605px;width:400px;height:1px;background:#d4d4d4"></div>
<div class="ctitle" style="left:783px;top:579px;width:400px">TEAM PIPELINE</div>
<div class="abs" style="left:1383px;top:566px;width:400px;height:1px;background:#d4d4d4"></div>
<div class="abs" style="left:1383px;top:605px;width:400px;height:1px;background:#d4d4d4"></div>
<div class="ctitle" style="left:1383px;top:579px;width:400px">TEAM SALES BY PRODUCT LINE</div>
<svg class="abs" style="left:170px;top:620px" width="440" height="360" viewBox="170 620 440 360" font-family="Liberation Sans, Arial, sans-serif" font-size="12">
<circle cx="297.4" cy="809.4" r="63.8" fill="#1380ad"/>
<circle cx="412.9" cy="809.2" r="50.9" fill="#61932c"/>
<circle cx="366.2" cy="728.8" r="41.2" fill="#d4a704"/>
<circle cx="292.9" cy="711.7" r="33.2" fill="#3bb0a9"/>
<circle cx="431.3" cy="736.3" r="23.3" fill="#3bb0a9"/>
<circle cx="450.5" cy="762.5" r="8.3" fill="#3bb0a9"/>
<circle cx="262.7" cy="743.5" r="9.8" fill="#d4a704"/>
<circle cx="362.5" cy="780" r="6.7" fill="#d4a704"/>
<circle cx="226" cy="830" r="9.9" fill="#61932c"/>
<circle cx="224.6" cy="872.9" r="32.1" fill="#1380ad"/>
<circle cx="285.2" cy="912.3" r="39.4" fill="#d4a704"/>
<circle cx="366.5" cy="892.7" r="43.5" fill="#3bb0a9"/>
<circle cx="445" cy="889" r="34.1" fill="#1380ad"/>
<circle cx="466.5" cy="846" r="13.2" fill="#61932c"/>
<circle cx="362.3" cy="838.8" r="6.8" fill="#3bb0a9"/>
<circle cx="320.4" cy="874.8" r="4.9" fill="#1380ad"/>
<circle cx="354.2" cy="842.5" r="1" fill="#1380ad"/>
<circle cx="352.5" cy="845.3" r="1" fill="#d4a704"/>
<circle cx="413.8" cy="927.8" r="14.7" fill="#d4a704"/>
<circle cx="333.3" cy="945.8" r="18.3" fill="#61932c"/>
<circle cx="361.2" cy="945.2" r="8.4" fill="#d4a704"/>
<text x="297.4" y="806.9" text-anchor="middle" fill="#f4fbfb">Outdoors Shop</text>
<text x="297.4" y="821.1" text-anchor="middle" fill="#f4fbfb">104,432</text>
<text x="412.9" y="806.7" text-anchor="middle" fill="#f4fbfb">Outdoors Shop</text>
<text x="412.9" y="820.9" text-anchor="middle" fill="#f4fbfb">83,505</text>
<text x="366.2" y="726.2" text-anchor="middle" fill="#f4fbfb">Sports Store</text>
<text x="366.2" y="740.5" text-anchor="middle" fill="#f4fbfb">67,666</text>
<text x="292.9" y="702.1" text-anchor="middle" fill="#f4fbfb">Sports</text>
<text x="292.9" y="716.3" text-anchor="middle" fill="#f4fbfb">Store</text>
<text x="292.9" y="730.5" text-anchor="middle" fill="#f4fbfb">54,379</text>
<text x="431.3" y="733.8" text-anchor="middle" fill="#f4fbfb">Depa...</text>
<text x="431.3" y="748" text-anchor="middle" fill="#f4fbfb">38,478</text>
<text x="262.7" y="748.5" text-anchor="middle" fill="#f4fbfb" letter-spacing="0.5">...</text>
<text x="226" y="835" text-anchor="middle" fill="#f4fbfb" letter-spacing="0.5">...</text>
<text x="224.6" y="863.3" text-anchor="middle" fill="#f4fbfb">Sports</text>
<text x="224.6" y="877.5" text-anchor="middle" fill="#f4fbfb">Store</text>
<text x="224.6" y="891.7" text-anchor="middle" fill="#f4fbfb">52,787</text>
<text x="285.2" y="902.7" text-anchor="middle" fill="#f4fbfb">Department</text>
<text x="285.2" y="916.9" text-anchor="middle" fill="#f4fbfb">Store</text>
<text x="285.2" y="931.1" text-anchor="middle" fill="#f4fbfb">64,551</text>
<text x="366.5" y="890.2" text-anchor="middle" fill="#f4fbfb">Outdoors Shop</text>
<text x="366.5" y="904.4" text-anchor="middle" fill="#f4fbfb">71,385</text>
<text x="445" y="886.5" text-anchor="middle" fill="#f4fbfb">Departm...</text>
<text x="445" y="900.7" text-anchor="middle" fill="#f4fbfb">55,963</text>
<text x="466.5" y="850.6" text-anchor="middle" fill="#f4fbfb">S...</text>
<text x="413.8" y="932.4" text-anchor="middle" fill="#f4fbfb">E...</text>
<text x="333.3" y="943.3" text-anchor="middle" fill="#f4fbfb">Wa...</text>
<text x="333.3" y="957.5" text-anchor="middle" fill="#f4fbfb">30,...</text>
<text x="527.5" y="648" text-anchor="middle" fill="#7b7b7b" letter-spacing="0.3">Employee</text>
<text x="527.5" y="663" text-anchor="middle" fill="#7b7b7b" letter-spacing="0.3">name</text>
<circle cx="495.5" cy="682.5" r="10" fill="#1380ad"/>
<text x="509" y="686.8" fill="#7b7b7b" letter-spacing="0.3">Eric Car...</text>
<circle cx="495.5" cy="707.5" r="10" fill="#3bb0a9"/>
<text x="509" y="711.8" fill="#7b7b7b" letter-spacing="0.3">James ...</text>
<circle cx="495.5" cy="732.5" r="10" fill="#61932c"/>
<text x="509" y="736.8" fill="#7b7b7b" letter-spacing="0.3">Pierre L...</text>
<circle cx="495.5" cy="757.5" r="10" fill="#d4a704"/>
<text x="509" y="761.8" fill="#7b7b7b" letter-spacing="0.3">Rhonda ...</text>
</svg>
<svg class="abs" style="left:783px;top:615px" width="410" height="420" viewBox="783 615 410 420" font-family="Liberation Sans, Arial, sans-serif" font-size="12">
<rect x="861.6" y="630" width="241.4" height="310.5" fill="#e9e9e9"/>
<rect x="861.6" y="888.1" width="241.4" height="1.2" fill="#fff"/>
<rect x="861.6" y="836.4" width="241.4" height="1.2" fill="#fff"/>
<rect x="861.6" y="784.6" width="241.4" height="1.2" fill="#fff"/>
<rect x="861.6" y="732.9" width="241.4" height="1.2" fill="#fff"/>
<rect x="861.6" y="681.1" width="241.4" height="1.2" fill="#fff"/>
<text x="853.3" y="944.8" text-anchor="end" fill="#6c6c6c" letter-spacing="0.15">0</text>
<text x="853.3" y="893" text-anchor="end" fill="#6c6c6c" letter-spacing="0.15">20,000</text>
<text x="853.3" y="841.3" text-anchor="end" fill="#6c6c6c" letter-spacing="0.15">40,000</text>
<text x="853.3" y="789.5" text-anchor="end" fill="#6c6c6c" letter-spacing="0.15">60,000</text>
<text x="853.3" y="737.8" text-anchor="end" fill="#6c6c6c" letter-spacing="0.15">80,000</text>
<text x="853.3" y="686" text-anchor="end" fill="#6c6c6c" letter-spacing="0.15">100,000</text>
<text x="853.3" y="635.3" text-anchor="end" fill="#6c6c6c" letter-spacing="0.15">120,000</text>
<path d="M862 939.6 V705.3 Q862 703.3 864 703.3 H869.4 Q871.4 703.3 871.4 705.3 V939.6Z" fill="#1380ad"/>
<path d="M872.6 939.6 V744.8 Q872.6 742.8 874.6 742.8 H880 Q882 742.8 882 744.8 V939.6Z" fill="#3bb0a9"/>
<path d="M883.2 939.6 V753.4 Q883.2 751.4 885.2 751.4 H890.6 Q892.6 751.4 892.6 753.4 V939.6Z" fill="#61932c"/>
<path d="M893.8 939.6 V670.1 Q893.8 668.1 895.8 668.1 H901.2 Q903.2 668.1 903.2 670.1 V939.6Z" fill="#d4a704"/>
<path d="M911.7 939.6 V906 Q911.7 904 913.7 904 H919.1 Q921.1 904 921.1 906 V939.6Z" fill="#1380ad"/>
<path d="M922.3 939.6 V896.4 Q922.3 894.4 924.3 894.4 H929.7 Q931.7 894.4 931.7 896.4 V939.6Z" fill="#3bb0a9"/>
<path d="M932.9 939.6 V935.1 Q932.9 933.1 934.9 933.1 H940.3 Q942.3 933.1 942.3 935.1 V939.6Z" fill="#61932c"/>
<path d="M943.5 939.6 V864 Q943.5 862 945.5 862 H950.9 Q952.9 862 952.9 864 V939.6Z" fill="#d4a704"/>
<path d="M961.4 939.6 V779.6 Q961.4 777.6 963.4 777.6 H968.8 Q970.8 777.6 970.8 779.6 V939.6Z" fill="#1380ad"/>
<path d="M972 939.6 V826.4 Q972 824.4 974 824.4 H979.4 Q981.4 824.4 981.4 826.4 V939.6Z" fill="#3bb0a9"/>
<path d="M982.6 939.6 V842.2 Q982.6 840.2 984.6 840.2 H990 Q992 840.2 992 842.2 V939.6Z" fill="#61932c"/>
<path d="M993.2 939.6 V922 Q993.2 920 995.2 920 H1000.6 Q1002.6 920 1002.6 922 V939.6Z" fill="#d4a704"/>
<path d="M1011.2 939.6 V904.5 Q1011.2 902.5 1013.2 902.5 H1018.6 Q1020.6 902.5 1020.6 904.5 V939.6Z" fill="#1380ad"/>
<path d="M1021.8 939.6 V890.2 Q1021.8 888.2 1023.8 888.2 H1029.2 Q1031.2 888.2 1031.2 890.2 V939.6Z" fill="#3bb0a9"/>
<path d="M1032.4 939.6 V904.1 Q1032.4 902.1 1034.4 902.1 H1039.8 Q1041.8 902.1 1041.8 904.1 V939.6Z" fill="#61932c"/>
<path d="M1043 939.6 V886.4 Q1043 884.4 1045 884.4 H1050.4 Q1052.4 884.4 1052.4 886.4 V939.6Z" fill="#d4a704"/>
<path d="M1060.9 939.6 V838.8 Q1060.9 836.8 1062.9 836.8 H1068.3 Q1070.3 836.8 1070.3 838.8 V939.6Z" fill="#1380ad"/>
<path d="M1071.5 939.6 V865.3 Q1071.5 863.3 1073.5 863.3 H1078.9 Q1080.9 863.3 1080.9 865.3 V939.6Z" fill="#3bb0a9"/>
<path d="M1082.1 939.6 V884.9 Q1082.1 882.9 1084.1 882.9 H1089.5 Q1091.5 882.9 1091.5 884.9 V939.6Z" fill="#61932c"/>
<path d="M1092.7 939.6 V853.3 Q1092.7 851.3 1094.7 851.3 H1100.1 Q1102.1 851.3 1102.1 853.3 V939.6Z" fill="#d4a704"/>
<text transform="translate(879.8 947.500) rotate(-90)" text-anchor="end" fill="#6c6c6c" letter-spacing="0.4">Camping</text>
<text transform="translate(894.3 947.500) rotate(-90)" text-anchor="end" fill="#6c6c6c" letter-spacing="0.4">Equip...</text>
<text transform="translate(930.6 947.500) rotate(-90)" text-anchor="end" fill="#6c6c6c" letter-spacing="0.4">Golf</text>
<text transform="translate(944 947.500) rotate(-90)" text-anchor="end" fill="#6c6c6c" letter-spacing="0.4">Equip...</text>
<text transform="translate(987.2 947.500) rotate(-90)" text-anchor="end" fill="#6c6c6c" letter-spacing="0.4">Mount...</text>
<text transform="translate(1028.8 947.500) rotate(-90)" text-anchor="end" fill="#6c6c6c" letter-spacing="0.4">Outdoor</text>
<text transform="translate(1043.8 947.500) rotate(-90)" text-anchor="end" fill="#6c6c6c" letter-spacing="0.4">Protect...</text>
<text transform="translate(1079 947.500) rotate(-90)" text-anchor="end" fill="#6c6c6c" letter-spacing="0.4">Personal</text>
<text transform="translate(1093.3 947.500) rotate(-90)" text-anchor="end" fill="#6c6c6c" letter-spacing="0.4">Access...</text>
<text x="982.500" y="1012.500" text-anchor="middle" fill="#7b7b7b" letter-spacing="0.3">Product line</text>
<text transform="translate(799 786) rotate(-90)" text-anchor="middle" fill="#7b7b7b" letter-spacing="0.3">Quantity</text>
<text x="1143" y="634.600" text-anchor="middle" fill="#7b7b7b" letter-spacing="0.3">Employee</text>
<text x="1143" y="649.200" text-anchor="middle" fill="#7b7b7b" letter-spacing="0.3">name</text>
<rect x="1105.600" y="659.2" width="19.600" height="19.500" rx="3" fill="#1380ad"/>
<text x="1129" y="673.6" fill="#7b7b7b" letter-spacing="0.3">Eric Ca...</text>
<rect x="1105.600" y="684.2" width="19.600" height="19.500" rx="3" fill="#3bb0a9"/>
<text x="1129" y="698.6" fill="#7b7b7b" letter-spacing="0.3">James ...</text>
<rect x="1105.600" y="709.2" width="19.600" height="19.500" rx="3" fill="#61932c"/>
<text x="1129" y="723.6" fill="#7b7b7b" letter-spacing="0.3">Pierre ...</text>
<rect x="1105.600" y="734.2" width="19.600" height="19.500" rx="3" fill="#d4a704"/>
<text x="1129" y="748.6" fill="#7b7b7b" letter-spacing="0.3">Rhond...</text>
</svg>
<svg class="abs" style="left:1383px;top:615px" width="410" height="420" viewBox="1383 615 410 420" font-family="Liberation Sans, Arial, sans-serif" font-size="12">
<rect x="1448.3" y="630" width="245.6" height="310.5" fill="#e9e9e9"/>
<rect x="1448.3" y="901.1" width="245.6" height="1.2" fill="#fff"/>
<rect x="1448.3" y="862.3" width="245.6" height="1.2" fill="#fff"/>
<rect x="1448.3" y="823.5" width="245.6" height="1.2" fill="#fff"/>
<rect x="1448.3" y="784.7" width="245.6" height="1.2" fill="#fff"/>
<rect x="1448.3" y="745.9" width="245.6" height="1.2" fill="#fff"/>
<rect x="1448.3" y="707.1" width="245.6" height="1.2" fill="#fff"/>
<rect x="1448.3" y="668.3" width="245.6" height="1.2" fill="#fff"/>
<polygon points="1448.3,940.5 1448.3,723.2 1470.6,684.3 1493,732.1 1515.3,683.2 1537.6,691.1 1559.9,636.7 1582.3,681.5 1604.6,691.6 1626.9,696.1 1649.2,677.3 1671.6,724.9 1693.9,701.8 1693.9,940.5" fill="#d9b033" fill-opacity="0.96" stroke="#fff" stroke-opacity="0.25" stroke-width="0.6"/>
<polygon points="1448.3,940.5 1448.3,850.9 1470.6,730.6 1493,843 1515.3,769.1 1537.6,708.2 1559.9,705.5 1582.3,722.7 1604.6,749.9 1626.9,803.3 1649.2,706.1 1671.6,768 1693.9,743.5 1693.9,940.5" fill="#7fa657" fill-opacity="0.97" stroke="#fff" stroke-opacity="0.25" stroke-width="0.6"/>
<polygon points="1448.3,940.5 1448.3,858.3 1470.6,760.5 1493,876.5 1515.3,795.4 1537.6,773.4 1559.9,720.4 1582.3,801.1 1604.6,785.7 1626.9,853 1649.2,779.8 1671.6,836.5 1693.9,832.7 1693.9,940.5" fill="#62bcb8" fill-opacity="0.97" stroke="#fff" stroke-opacity="0.25" stroke-width="0.6"/>
<polygon points="1448.3,940.5 1448.3,903.2 1470.6,845.5 1493,895.1 1515.3,846.6 1537.6,810.7 1559.9,797 1582.3,874.8 1604.6,867.9 1626.9,861.1 1649.2,925 1671.6,870.7 1693.9,917.1 1693.9,940.5" fill="#4497bd" fill-opacity="0.96" stroke="#fff" stroke-opacity="0.25" stroke-width="0.6"/>
<text x="1440.500" y="944.8" text-anchor="end" fill="#6c6c6c" letter-spacing="0.15">0</text>
<text x="1440.500" y="906" text-anchor="end" fill="#6c6c6c" letter-spacing="0.15">10,000</text>
<text x="1440.500" y="867.2" text-anchor="end" fill="#6c6c6c" letter-spacing="0.15">20,000</text>
<text x="1440.500" y="828.4" text-anchor="end" fill="#6c6c6c" letter-spacing="0.15">30,000</text>
<text x="1440.500" y="789.6" text-anchor="end" fill="#6c6c6c" letter-spacing="0.15">40,000</text>
<text x="1440.500" y="750.8" text-anchor="end" fill="#6c6c6c" letter-spacing="0.15">50,000</text>
<text x="1440.500" y="712" text-anchor="end" fill="#6c6c6c" letter-spacing="0.15">60,000</text>
<text x="1440.500" y="673.2" text-anchor="end" fill="#6c6c6c" letter-spacing="0.15">70,000</text>
<text x="1440.500" y="635.4" text-anchor="end" fill="#6c6c6c" letter-spacing="0.15">80,000</text>
<text transform="translate(1453.1 948) rotate(-90)" text-anchor="end" fill="#6c6c6c" letter-spacing="0.4">January</text>
<text transform="translate(1475.4 948) rotate(-90)" text-anchor="end" fill="#6c6c6c" letter-spacing="0.4">February</text>
<text transform="translate(1497.8 948) rotate(-90)" text-anchor="end" fill="#6c6c6c" letter-spacing="0.4">March</text>
<text transform="translate(1520.1 948) rotate(-90)" text-anchor="end" fill="#6c6c6c" letter-spacing="0.4">April</text>
<text transform="translate(1542.4 948) rotate(-90)" text-anchor="end" fill="#6c6c6c" letter-spacing="0.4">May</text>
<text transform="translate(1564.7 948) rotate(-90)" text-anchor="end" fill="#6c6c6c" letter-spacing="0.4">June</text>
<text transform="translate(1587.1 948) rotate(-90)" text-anchor="end" fill="#6c6c6c" letter-spacing="0.4">July</text>
<text transform="translate(1609.4 948) rotate(-90)" text-anchor="end" fill="#6c6c6c" letter-spacing="0.4">August</text>
<text transform="translate(1631.7 948) rotate(-90)" text-anchor="end" fill="#6c6c6c" letter-spacing="0.4">Septem...</text>
<text transform="translate(1654 948) rotate(-90)" text-anchor="end" fill="#6c6c6c" letter-spacing="0.4">October</text>
<text transform="translate(1676.4 948) rotate(-90)" text-anchor="end" fill="#6c6c6c" letter-spacing="0.4">Novem...</text>
<text transform="translate(1698.7 948) rotate(-90)" text-anchor="end" fill="#6c6c6c" letter-spacing="0.4">Decem...</text>
<text x="1570.500" y="1017" text-anchor="middle" fill="#7b7b7b" letter-spacing="0.3">Month</text>
<text transform="translate(1396 786) rotate(-90)" text-anchor="middle" fill="#7b7b7b" letter-spacing="0.3">Quantity</text>
<text x="1743" y="634.600" text-anchor="middle" fill="#7b7b7b" letter-spacing="0.3">Employee</text>
<text x="1743" y="649.200" text-anchor="middle" fill="#7b7b7b" letter-spacing="0.3">name</text>
<path d="M1705.600 678.7 L1713 665.7 L1717 669.7 L1725.300 659.2 V678.7Z" fill="#d9b033"/>
<text x="1729" y="673.6" fill="#7b7b7b" letter-spacing="0.3">Rhond...</text>
<path d="M1705.600 703.7 L1713 690.7 L1717 694.7 L1725.300 684.2 V703.7Z" fill="#7fa657"/>
<text x="1729" y="698.6" fill="#7b7b7b" letter-spacing="0.3">Pierre ...</text>
<path d="M1705.600 728.7 L1713 715.7 L1717 719.7 L1725.300 709.2 V728.7Z" fill="#62bcb8"/>
<text x="1729" y="723.6" fill="#7b7b7b" letter-spacing="0.3">James ...</text>
<path d="M1705.600 753.7 L1713 740.7 L1717 744.7 L1725.300 734.2 V753.7Z" fill="#4497bd"/>
<text x="1729" y="748.6" fill="#7b7b7b" letter-spacing="0.3">Eric Ca...</text>
</svg>
<!--POPUP-->
<div class="abs" style="left:1634px;top:119px;width:235px;height:168px;background:#fafafa;border:1px solid #b4b4b4;border-radius:7px;box-shadow:0 3px 7px rgba(0,0,0,0.33)"></div>
<svg class="abs" style="left:1738px;top:108px" width="28" height="14" viewBox="1738 108 28 14">
  <path d="M1741 120.500 L1751.300 110.500 L1761.600 120.500Z" fill="#fbfbfb"/>
  <path d="M1740.500 119.700 L1751.300 110 L1762.100 119.700" fill="none" stroke="#c6c6c6" stroke-width="1"/>
</svg>
<div class="abs" style="left:1635px;top:205px;width:233px;height:34px;background:#f3f3f3"></div>
<div class="pi" style="left:1683px;top:136px;color:#7a7a7a">Save report...</div>
<div class="pi" style="left:1683px;top:174px;color:#7a7a7a">Save report as report view...</div>
<div class="pi" style="left:1680px;top:212px;color:#2f2f2f;letter-spacing:-0.1px">Set as home</div>
<div class="pi" style="left:1680px;top:250px;color:#6f6f6f;letter-spacing:-0.1px">Subscribe</div>
<svg class="abs" style="left:1650px;top:210px" width="24" height="64" viewBox="1650 210 24 64">
  <path d="M1655.300 224 V232.200 H1668.700 V224" fill="none" stroke="#8fb2de" stroke-width="1"/>
  <path d="M1653.700 225 L1662 215.300 L1670.300 225" fill="none" stroke="#3d70b2" stroke-width="2.400" stroke-linejoin="miter"/>
  <circle cx="1662" cy="223.300" r="0.900" fill="#3d70b2"/>
  <rect x="1653.700" y="253.300" width="16.600" height="16" fill="#fdfdff" stroke="#8fb2de" stroke-width="1"/>
  <rect x="1653.200" y="252.800" width="17.600" height="2.800" fill="#3d70b2"/>
  <g fill="#3d70b2">
    <rect x="1659.500" y="258.200" width="2" height="2"/><rect x="1662.700" y="258.200" width="2" height="2"/><rect x="1665.900" y="258.200" width="2" height="2"/>
    <rect x="1656.300" y="261.400" width="2" height="2"/><rect x="1659.500" y="261.400" width="2" height="2"/><rect x="1662.700" y="261.400" width="2" height="2"/><rect x="1665.900" y="261.400" width="2" height="2"/>
    <rect x="1656.300" y="264.600" width="2" height="2"/><rect x="1659.500" y="264.600" width="2" height="2"/><rect x="1662.700" y="264.600" width="2" height="2"/>
  </g>
</svg>
<!--STATUS-->
<div id="status">javascript:void(0)</div>
<div id="bottomline"></div>
</div>
</body>
</html>
